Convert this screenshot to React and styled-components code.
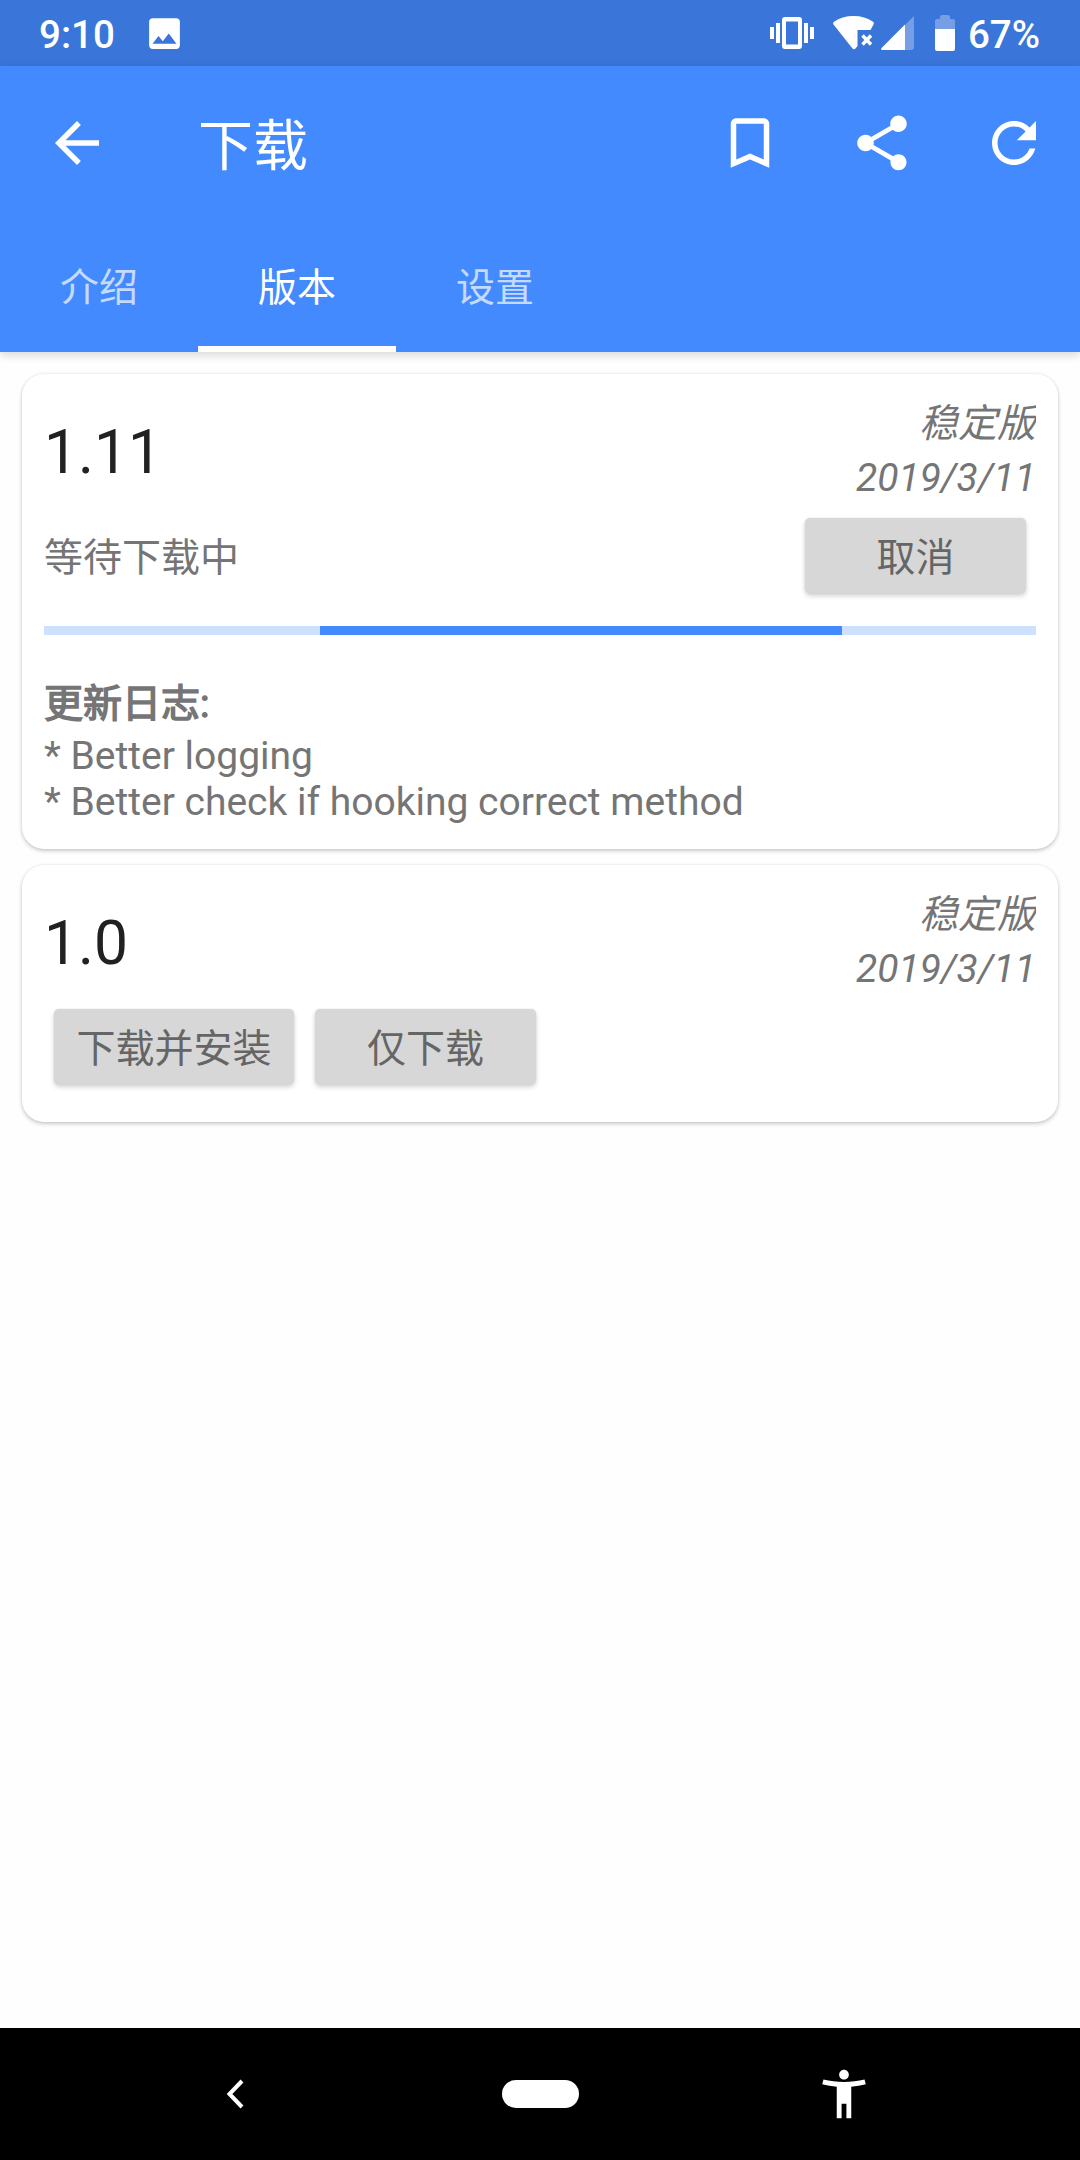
import React from "react";
import styled, { createGlobalStyle } from "styled-components";

const GlobalStyle = createGlobalStyle`
  * { box-sizing: border-box; }
  body {
    margin: 0;
    background: #fefefe;
    font-family: Roboto, "Noto Sans CJK SC", sans-serif;
    font-size: 39px;
    color: #757575;
  }
`;

const Screen = styled.div`
  width: 1080px;
  height: 2160px;
  display: flex;
  flex-direction: column;
  overflow: hidden;
`;

const StatusBar = styled.header`
  flex: none;
  height: 66px;
  padding: 0 40px 0 39px;
  display: flex;
  align-items: center;
  background: #3a75d9;
  color: #fff;
  font-size: 38.5px;
  font-weight: 500;
  line-height: 66px;
`;

const Clock = styled.span`
  width: 105px;
  padding-top: 4px;
`;

const StatusIcons = styled.div`
  margin-left: auto;
  display: flex;
  align-items: center;
`;

const StatusIcon = styled.svg`
  display: block;
  width: ${(p) => p.$w}px;
  height: ${(p) => p.$h || 66}px;
  margin-right: ${(p) => p.$gap || 0}px;
  fill: currentColor;
`;

const Percent = styled.span`
  padding-top: 4px;
`;

const AppBar = styled.div`
  flex: none;
  position: relative;
  z-index: 1;
  background: #448aff;
  color: #fff;
  box-shadow: 0 3px 9px rgba(0, 0, 0, 0.16);
`;

const Toolbar = styled.div`
  height: 154px;
  padding: 0 33px 0 44px;
  display: flex;
  align-items: center;
`;

const Title = styled.h1`
  flex: 1;
  margin: 0 0 0 88px;
  padding-top: 5px;
  font-size: 55px;
  line-height: 80px;
  font-weight: 400;
`;

const Actions = styled.div`
  display: flex;
  gap: 66px;
`;

const IconButton = styled.button`
  width: 66px;
  height: 66px;
  padding: 0;
  border: 0;
  background: none;
  color: inherit;
`;

const Glyph = styled.svg`
  display: block;
  width: ${(p) => p.$size}px;
  height: ${(p) => p.$size}px;
  fill: currentColor;
`;

const Tabs = styled.nav`
  height: 132px;
  display: flex;
`;

const Tab = styled.button`
  width: 198px;
  padding: 2px 0 0;
  border: 0;
  border-bottom: 6px solid ${(p) => (p.$active ? "#fff" : "transparent")};
  background: none;
  color: ${(p) => (p.$active ? "#fff" : "rgba(255, 255, 255, 0.7)")};
  font: inherit;
`;

const List = styled.main`
  flex: 1;
  padding: 22px 22px 0;
  display: flex;
  flex-direction: column;
  gap: 16px;
`;

const Card = styled.article`
  height: ${(p) => p.$height}px;
  padding: 22px;
  border-radius: 22px;
  background: #fff;
  box-shadow: 0 2px 4px rgba(0, 0, 0, 0.2), 0 0 3px rgba(0, 0, 0, 0.08);
`;

const CardHead = styled.div`
  display: flex;
  justify-content: space-between;
  height: 110px;
`;

const Version = styled.h2`
  margin: 0;
  font-size: 60.5px;
  line-height: 114px;
  font-weight: 400;
  color: #212121;
`;

const Meta = styled.div`
  padding-top: 1px;
  overflow: hidden;
  text-align: right;
  font-style: italic;
  line-height: 54px;
`;

const StatusRow = styled.div`
  display: flex;
  align-items: center;
  justify-content: space-between;
  height: 98px;
  padding-right: 10px;
`;

const StatusText = styled.span`
  padding-bottom: 3px;
`;

const ButtonRow = styled.div`
  display: flex;
  align-items: center;
  gap: 21px;
  height: 98px;
  padding-left: 10px;
`;

const Button = styled.button`
  width: ${(p) => p.$width}px;
  height: 75px;
  margin-top: 1px;
  padding: 0 0 3px;
  border: 0;
  border-radius: 5px;
  background: #d7d7d7;
  box-shadow: 0 3px 5px rgba(0, 0, 0, 0.18), 0 0 2px rgba(0, 0, 0, 0.1);
  color: #656565;
  font: inherit;
`;

const Progress = styled.div`
  height: 9px;
  margin: 22px 0 40px;
  padding: 0 194px 0 276px;
  background: #cde0fe;
`;

const ProgressFill = styled.div`
  height: 100%;
  background: #448aff;
`;

const LogTitle = styled.div`
  line-height: 58px;
  -webkit-text-stroke: 1.4px currentColor;
`;

const LogLine = styled.div`
  line-height: 46px;
`;

const NavBar = styled.footer`
  flex: none;
  height: 132px;
  display: flex;
  align-items: center;
  justify-content: space-between;
  padding: 0 207px;
  background: #000;
  color: #fff;
`;

const HomePill = styled.div`
  width: 77px;
  height: 28px;
  border-radius: 14px;
  background: #fff;
`;

const icons = {
  back: "M20 11H7.83l5.59-5.59L12 4l-8 8 8 8 1.41-1.41L7.83 13H20v-2z",
  bookmark: "M17 3H7c-1.1 0-1.99.9-1.99 2L5 21l7-3 7 3V5c0-1.1-.9-2-2-2zm0 15l-5-2.18L7 18V5h10v13z",
  share:
    "M18 16.08c-.76 0-1.44.3-1.96.77L8.91 12.7c.05-.23.09-.46.09-.7s-.04-.47-.09-.7l7.05-4.11c.54.5 1.25.81 2.04.81 1.66 0 3-1.34 3-3s-1.34-3-3-3-3 1.34-3 3c0 .24.04.47.09.7L8.04 9.81C7.5 9.31 6.79 9 6 9c-1.66 0-3 1.34-3 3s1.34 3 3 3c.79 0 1.5-.31 2.04-.81l7.12 4.16c-.05.21-.08.43-.08.65 0 1.61 1.31 2.92 2.92 2.92s2.92-1.31 2.92-2.92-1.31-2.92-2.92-2.92z",
  refresh:
    "M17.65 6.35C16.2 4.9 14.21 4 12 4c-4.42 0-7.99 3.58-7.99 8s3.57 8 7.99 8c3.73 0 6.84-2.55 7.73-6h-2.08c-.82 2.33-3.04 4-5.65 4-3.31 0-6-2.69-6-6s2.69-6 6-6c1.66 0 3.14.69 4.22 1.78L13 11h7V4l-2.35 2.35z",
  image:
    "M21 19V5c0-1.1-.9-2-2-2H5c-1.1 0-2 .9-2 2v14c0 1.1.9 2 2 2h14c1.1 0 2-.9 2-2zM8.500 13.500l2.500 3.010L14.500 12l4.500 6H5l3.500-4.500z",
  person:
    "M20.5 6c-2.61.7-5.67 1-8.500 1s-5.890-.3-8.500-1L3 8c1.860.5 4 .83 6 1v13h2v-6h2v6h2V9c2-.17 4.140-.5 6-1l-.5-2zM12 6c1.100 0 2-.9 2-2s-.9-2-2-2-2 .9-2 2 .9 2 2 2z",
};

const Icon = ({ name, size = 66 }) => (
  <Glyph $size={size} viewBox="0 0 24 24">
    <path d={icons[name]} />
  </Glyph>
);

const VersionHead = ({ version }) => (
  <CardHead>
    <Version>{version}</Version>
    <Meta>
      <div>稳定版</div>
      <div>2019/3/11</div>
    </Meta>
  </CardHead>
);

export default function App() {
  return (
    <Screen>
      <GlobalStyle />
      <StatusBar>
        <Clock>9:10</Clock>
        <Icon name="image" size={41} />
        <StatusIcons>
          {/* vibrate */}
          <StatusIcon $w={44} $gap={19} viewBox="0 0 44 66">
            <path d="M0 27h4v12H0zM6 23h4v20H6zM34 23h4v20h-4zM40 27h4v12h-4z" />
            <path
              fillRule="evenodd"
              d="M15 17h14q3 0 3 3v26q0 3-3 3H15q-3 0-3-3V20q0-3 3-3zM16 21.500v23h12v-23z"
            />
          </StatusIcon>
          {/* wifi without a connection */}
          <StatusIcon $w={42} $gap={6} viewBox="0 0 42 66">
            <path d="M.5 24.500Q-.5 23 1 21.800Q9 16 20.500 16T40 21.800Q41.500 23 40.500 24.500L37.500 30H24.500V46L22.500 48.500Q21 50 19.500 48.500Z" />
            <path d="M29.500 35.500l8.500 9M38 35.500l-8.500 9" stroke="currentColor" strokeWidth="3.400" />
          </StatusIcon>
          {/* cell signal */}
          <StatusIcon $w={33} $gap={21} viewBox="0 0 33 66">
            <path d="M33 16V47q0 3-3 3H24V25z" opacity=".3" />
            <path d="M24 24.500V50H1.500Q-1 50 .8 47.800Z" />
          </StatusIcon>
          {/* battery */}
          <StatusIcon $w={20} $gap={13} viewBox="0 0 20 66">
            <path d="M0 29V21q0-2 2-2H5V17q0-2 2-2h6q2 0 2 2v2h3q2 0 2 2v8z" opacity=".3" />
            <path d="M0 29h20V49q0 2-2 2H2q-2 0-2-2z" />
          </StatusIcon>
          <Percent>67%</Percent>
        </StatusIcons>
      </StatusBar>

      <AppBar>
        <Toolbar>
          <IconButton>
            <Icon name="back" />
          </IconButton>
          <Title>下载</Title>
          <Actions>
            {["bookmark", "share", "refresh"].map((name) => (
              <IconButton key={name}>
                <Icon name={name} />
              </IconButton>
            ))}
          </Actions>
        </Toolbar>
        <Tabs>
          <Tab>介绍</Tab>
          <Tab $active>版本</Tab>
          <Tab>设置</Tab>
        </Tabs>
      </AppBar>

      <List>
        <Card $height={475}>
          <VersionHead version="1.11" />
          <StatusRow>
            <StatusText>等待下载中</StatusText>
            <Button $width={221}>取消</Button>
          </StatusRow>
          <Progress>
            <ProgressFill />
          </Progress>
          <LogTitle>更新日志:</LogTitle>
          <LogLine>* Better logging</LogLine>
          <LogLine>* Better check if hooking correct method</LogLine>
        </Card>
        <Card $height={257}>
          <VersionHead version="1.0" />
          <ButtonRow>
            <Button $width={240}>下载并安装</Button>
            <Button $width={221}>仅下载</Button>
          </ButtonRow>
        </Card>
      </List>

      <NavBar>
        <Glyph $size={58} viewBox="0 0 58 58">
          <path d="M35 16l-12.500 13 12.500 13" fill="none" stroke="currentColor" strokeWidth="4" />
        </Glyph>
        <HomePill />
        <Icon name="person" size={58} />
      </NavBar>
    </Screen>
  );
}
